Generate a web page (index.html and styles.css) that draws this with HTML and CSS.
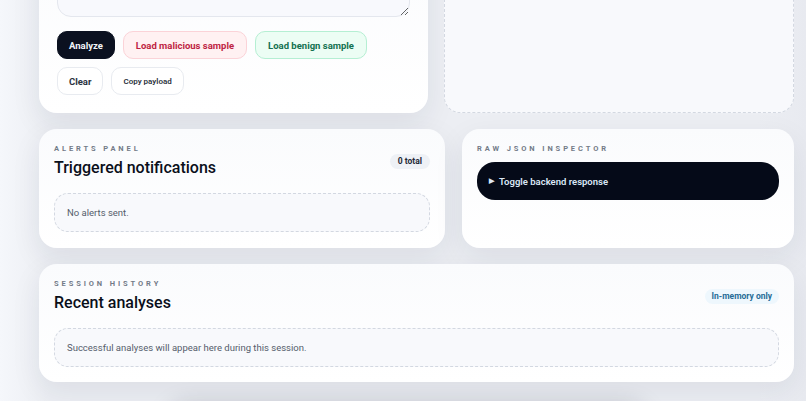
FILE: index.html
```html
<!DOCTYPE html>
<html lang="en">
<head>
    <meta charset="UTF-8">
    <meta name="viewport" content="width=device-width, initial-scale=1.0">
    <title>Payload Analyzer</title>
    <link rel="stylesheet" href="styles.css">
</head>
<body>
    <main class="layout">
        <section class="row row-top">
            <div class="card composer">
                <textarea class="payload" id="payload" spellcheck="false"></textarea>
                <div class="actions">
                    <button class="btn btn-dark" id="analyzeBtn">Analyze</button>
                    <button class="btn btn-danger" id="maliciousBtn">Load malicious sample</button>
                    <button class="btn btn-safe" id="benignBtn">Load benign sample</button>
                </div>
                <div class="actions">
                    <button class="btn btn-plain" id="clearBtn">Clear</button>
                    <button class="btn btn-plain btn-small" id="copyBtn">Copy payload</button>
                </div>
            </div>
            <div class="result-empty"></div>
        </section>

        <section class="row row-middle">
            <div class="card">
                <div class="card-head">
                    <div>
                        <p class="eyebrow">Alerts panel</p>
                        <h2 class="card-title">Triggered notifications</h2>
                    </div>
                    <span class="pill pill-gray">0 total</span>
                </div>
                <div class="empty-box">No alerts sent.</div>
            </div>
            <div class="card">
                <p class="eyebrow">Raw JSON inspector</p>
                <details class="inspector">
                    <summary>Toggle backend response</summary>
                </details>
            </div>
        </section>

        <section class="card card-session">
            <div class="card-head">
                <div>
                    <p class="eyebrow">Session history</p>
                    <h2 class="card-title">Recent analyses</h2>
                </div>
                <span class="pill pill-blue">In-memory only</span>
            </div>
            <div class="empty-box">Successful analyses will appear here during this session.</div>
        </section>

        <div class="footer-bar"></div>
    </main>
</body>
</html>
```

FILE: styles.css
```css
* {
    margin: 0;
    padding: 0;
    box-sizing: border-box;
    font-family: Roboto, 'Liberation Sans', sans-serif;
}

body {
    background: linear-gradient(90deg, #f5f7fb 0%, #eceef3 6%, #eceef3 94%, #e8eaf0 100%);
    min-height: 100vh;
    overflow: hidden;
}

.layout {
    width: 755px;
    margin: -60px 0 0 39px;
    display: flex;
    flex-direction: column;
    gap: 16px;
}

.row {
    display: grid;
    gap: 17px;
}

.row-top {
    grid-template-columns: 389px 1fr;
    gap: 16px;
}

.row-middle {
    grid-template-columns: 406px 1fr;
}

.card {
    background: linear-gradient(180deg, #fafbfd 0%, #ffffff 100%);
    border-radius: 18px;
    box-shadow: 0 10px 30px rgba(30, 41, 70, 0.08);
    padding: 15px 15px 16px;
}

.card-session {
    padding-bottom: 15px;
}

.composer {
    padding: 18px;
}

.payload {
    display: block;
    width: 100%;
    height: 59px;
    border: 1px solid #e4e7ee;
    border-radius: 14px;
    background: #f8f9fd;
    resize: vertical;
    outline: none;
}

.actions {
    display: flex;
    gap: 8px;
    margin-top: 14px;
}

.actions + .actions {
    margin-top: 8px;
}

.btn {
    height: 28px;
    padding: 0 12px;
    border-radius: 10px;
    border: 1px solid #e8ebf0;
    background: #fff;
    font-size: 9.5px;
    font-weight: 700;
    color: #1f2937;
    cursor: pointer;
}

.btn-dark {
    padding: 0 11px;
    background: #0b1120;
    border-color: #0b1120;
    color: #f1f5f9;
}

.btn-danger {
    background: #fff1f2;
    border-color: #fbd3d8;
    color: #be1f43;
}

.btn-safe {
    background: #ecfdf4;
    border-color: #b5efd3;
    color: #137150;
}

.btn-plain {
    padding: 0 11px;
    color: #2b3340;
}

.btn-small {
    font-size: 8px;
    font-weight: 600;
}

.result-empty {
    border: 1px dashed #d3d8e1;
    border-radius: 16px;
    background: #f8f9fc;
}

.card-head {
    display: flex;
    justify-content: space-between;
    align-items: center;
}

.eyebrow {
    font-size: 7.5px;
    font-weight: 700;
    letter-spacing: 2.9px;
    text-transform: uppercase;
    color: #737b88;
    line-height: 10px;
}

.card-title {
    margin-top: 4px;
    font-size: 16px;
    font-weight: 500;
    color: #0a0f1a;
    line-height: 20px;
}

.pill {
    font-size: 8.5px;
    font-weight: 700;
    padding: 3px 8px;
    border-radius: 999px;
    line-height: 9px;
}

.pill-gray {
    background: #eef1f6;
    color: #1f2937;
}

.pill-blue {
    background: #eef7fd;
    color: #276c97;
    padding: 3px 7px;
}

.empty-box {
    margin-top: 15px;
    height: 39px;
    display: flex;
    align-items: center;
    padding: 0 12px;
    border: 1px dashed #d3d8e1;
    border-radius: 14px;
    background: #f8f9fc;
    font-size: 9.5px;
    color: #555d6b;
}

.inspector {
    margin-top: 8px;
}

.inspector summary {
    list-style: none;
    height: 38px;
    display: flex;
    align-items: center;
    padding: 0 12px;
    border-radius: 18px;
    background: #050a18;
    color: #dbe7f5;
    font-size: 9.5px;
    font-weight: 600;
    cursor: pointer;
}

.inspector summary::-webkit-details-marker {
    display: none;
}

.inspector summary::before {
    content: "\25B6";
    font-size: 7px;
    margin-right: 5px;
}

.footer-bar {
    width: 475px;
    height: 60px;
    margin: 8px 0 0 131px;
    border-radius: 18px;
    background: #eceef3;
    box-shadow: 0 0 24px rgba(20, 24, 40, 0.22);
}
```
